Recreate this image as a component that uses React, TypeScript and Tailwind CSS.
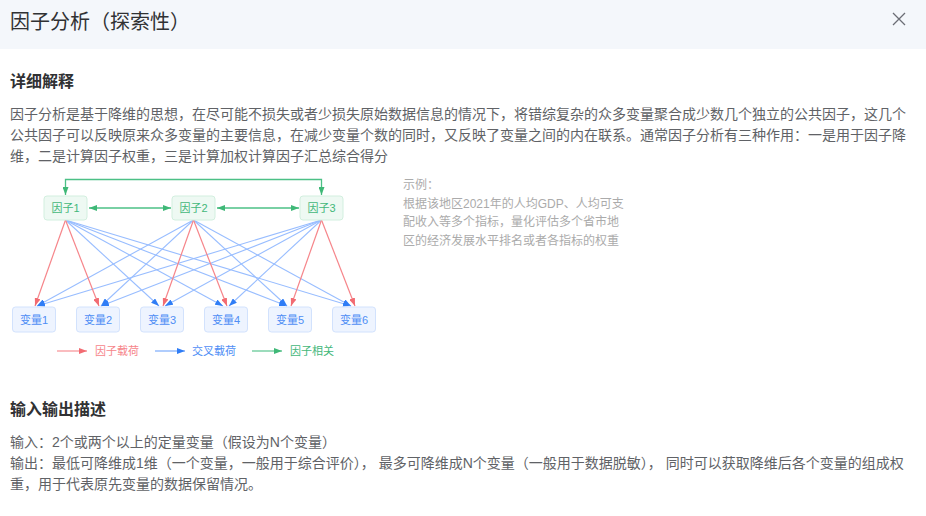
import React from 'react';

const factors = [65.5, 193.5, 321.5];
const vars = [34, 98, 162, 226, 290, 354];

// which variable each factor loads on (red), rest are cross loadings (blue)
const mainLoad: Record<number, number[]> = { 0: [0, 1], 1: [2, 3], 2: [4, 5] };

function FactorDiagram() {
  const red: React.ReactNode[] = [];
  const blue: React.ReactNode[] = [];

  factors.forEach((fx, fi) => {
    vars.forEach((vx, vi) => {
      const isMain = mainLoad[fi].includes(vi);
      if (isMain) {
        red.push(
          <line key={`r${fi}-${vi}`} x1={fx} y1={220} x2={vx + 1} y2={306} stroke="#f6858a" strokeWidth={1.2} markerEnd="url(#ar-red)" />
        );
      } else {
        const ex = vx + (fx > vx ? 3 : -3);
        blue.push(
          <line key={`b${fi}-${vi}`} x1={fx} y1={220} x2={ex} y2={306} stroke="#98bdff" strokeWidth={1.1} markerEnd="url(#ar-blue)" />
        );
      }
    });
  });

  return (
    <svg width={373} height={193} viewBox="0 0 373 193" className="shrink-0">
      <defs>
        <marker id="ar-red" markerWidth={8} markerHeight={6} refX={8} refY={3} orient="auto" markerUnits="userSpaceOnUse">
          <path d="M0,0 L8,3 L0,6 z" fill="#f26b72" />
        </marker>
        <marker id="ar-blue" markerWidth={8} markerHeight={6} refX={8} refY={3} orient="auto" markerUnits="userSpaceOnUse">
          <path d="M0,0 L8,3 L0,6 z" fill="#2f7df6" />
        </marker>
        <marker id="ar-green" markerWidth={8} markerHeight={6} refX={8} refY={3} orient="auto-start-reverse" markerUnits="userSpaceOnUse">
          <path d="M0,0 L8,3 L0,6 z" fill="#3fb877" />
        </marker>
      </defs>
      <g transform="translate(-10,-172)" fontFamily="'Liberation Sans','Noto Sans CJK SC',sans-serif">
        {/* green correlation lines */}
        <path d="M65.5,195 V179.5 H321.5 V195" fill="none" stroke="#4cc086" strokeWidth={1.3} markerStart="url(#ar-green)" markerEnd="url(#ar-green)" />
        <line x1={89} y1={208} x2={171} y2={208} stroke="#4cc086" strokeWidth={1.3} markerStart="url(#ar-green)" markerEnd="url(#ar-green)" />
        <line x1={217} y1={208} x2={299} y2={208} stroke="#4cc086" strokeWidth={1.3} markerStart="url(#ar-green)" markerEnd="url(#ar-green)" />

        {blue}
        {red}

        {factors.map((fx, i) => (
          <g key={`f${i}`}>
            <rect x={fx - 21.5} y={196} width={43} height={24} rx={3} fill="#eef9f3" stroke="#d2efdf" />
            <text x={fx} y={212} textAnchor="middle" fontSize={11} fill="#43b77a">{`因子${i + 1}`}</text>
          </g>
        ))}

        {vars.map((vx, i) => (
          <g key={`v${i}`}>
            <rect x={vx - 21.5} y={307} width={43} height={25} rx={3} fill="#eef4ff" stroke="#d2e2fd" />
            <text x={vx} y={323.5} textAnchor="middle" fontSize={11} fill="#4f8ef5">{`变量${i + 1}`}</text>
          </g>
        ))}

        {/* legend */}
        <line x1={57} y1={351} x2={87} y2={351} stroke="#f6858a" strokeWidth={1.1} markerEnd="url(#ar-red)" />
        <text x={95} y={355} fontSize={11} fill="#f6858a">因子载荷</text>
        <line x1={155} y1={351} x2={185} y2={351} stroke="#6fa4fb" strokeWidth={1.1} markerEnd="url(#ar-blue)" />
        <text x={192} y={355} fontSize={11} fill="#4f8ef5">交叉载荷</text>
        <line x1={252} y1={351} x2={282} y2={351} stroke="#4cc086" strokeWidth={1.1} markerEnd="url(#ar-green)" />
        <text x={290} y={355} fontSize={11} fill="#43b77a">因子相关</text>
      </g>
    </svg>
  );
}

export default function App() {
  return (
    <div className="w-[926px] h-[516px] overflow-hidden bg-white font-['Liberation_Sans','Noto_Sans_CJK_SC',sans-serif]">
      <div className="h-[49px] bg-[#f4f7fb] flex items-start justify-between pl-[10px] pr-[20px] pt-[8px]">
        <h1 className="text-[20px] leading-[28px] text-[#303133]">因子分析（探索性）</h1>
        <button className="mt-[3.5px] text-[#666]">
          <svg width="14" height="14" viewBox="0 0 14 14">
            <path d="M1 1 L13 13 M13 1 L1 13" stroke="#6b6e75" strokeWidth="1.3" fill="none" />
          </svg>
        </button>
      </div>

      <div className="px-[10px]">
        <h2 className="mt-[21px] text-[16px] leading-[24px] font-bold text-[#303133]">详细解释</h2>
        <p className="mt-[9.5px] text-[14px] leading-[21px] text-[#606266]">
          因子分析是基于降维的思想，在尽可能不损失或者少损失原始数据信息的情况下，将错综复杂的众多变量聚合成少数几个独立的公共因子，这几个公共因子可以反映原来众多变量的主要信息，在减少变量个数的同时，又反映了变量之间的内在联系。通常因子分析有三种作用：一是用于因子降维，二是计算因子权重，三是计算加权计算因子汇总综合得分
        </p>

        <div className="mt-[5.5px] flex items-start">
          <FactorDiagram />
          <div className="ml-[20px] mt-[4px] w-[222px] text-[12px] leading-[18.5px] text-[#ababab]">
            <div>示例：</div>
            <div>根据该地区2021年的人均GDP、人均可支配收入等多个指标，量化评估多个省市地区的经济发展水平排名或者各指标的权重</div>
          </div>
        </div>

        <h2 className="mt-[33px] text-[16px] leading-[24px] font-bold text-[#303133]">输入输出描述</h2>
        <div className="mt-[9.5px] text-[14px] leading-[21px] text-[#606266]">
          <p>输入：2个或两个以上的定量变量（假设为N个变量）</p>
          <p>
            输出：最低可降维成1维（一个变量，一般用于综合评价）， 最多可降维成N个变量（一般用于数据脱敏）， 同时可以获取降维后各个变量的组成权
            <br />
            重，用于代表原先变量的数据保留情况。
          </p>
        </div>
      </div>
    </div>
  );
}
